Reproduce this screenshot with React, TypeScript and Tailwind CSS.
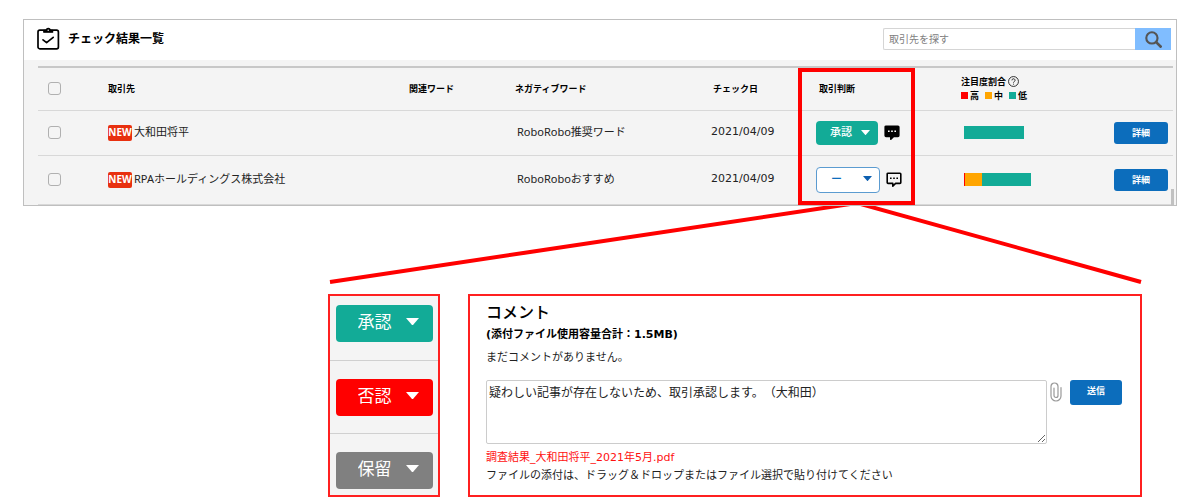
import { useState } from 'react';

interface Partner {
  id: number;
  name: string;
  negativeWord: string;
  checkedAt: string;
  status: string;
  commented: boolean;
  ratio: { high: number; middle: number; low: number };
}

const partners: Partner[] = [
  {
    id: 1,
    name: '大和田将平',
    negativeWord: 'RoboRobo推奨ワード',
    checkedAt: '2021/04/09',
    status: '承認',
    commented: true,
    ratio: { high: 0, middle: 0, low: 60 },
  },
  {
    id: 2,
    name: 'RPAホールディングス株式会社',
    negativeWord: 'RoboRoboおすすめ',
    checkedAt: '2021/04/09',
    status: 'ー',
    commented: false,
    ratio: { high: 1, middle: 17, low: 49 },
  },
];

const statuses = ['承認', '否認', '保留', 'ー'];

const statusStyles: Record<string, string> = {
  承認: 'h-6 w-[62px] bg-[#12ab97] text-white',
  否認: 'h-6 w-[62px] bg-[#ff0000] text-white',
  保留: 'h-6 w-[62px] bg-[#808080] text-white',
  ー: 'h-[26px] w-16 bg-white text-[#0c6dbc] border border-[#5b9bd0]',
};

const largeStatusStyles: Record<string, string> = {
  承認: 'bg-[#12ab97] text-white',
  否認: 'bg-[#ff0000] text-white',
  保留: 'bg-[#808080] text-white',
  ー: 'bg-white text-[#0c6dbc] border border-[#5b9bd0]',
};

function StatusSelect({ initial, label, large }: { initial: string; label: string; large?: boolean }) {
  const [status, setStatus] = useState(initial);
  const style = large
    ? `h-[37px] w-[97px] pl-[22px] pb-[2px] text-[17px] ${largeStatusStyles[status]}`
    : `pl-[14px] text-[11px] font-medium ${statusStyles[status]}`;

  return (
    <div className="relative inline-block align-middle">
      <select
        aria-label={label}
        value={status}
        onChange={(e) => setStatus(e.target.value)}
        className={`block appearance-none rounded ${style}`}
      >
        {statuses.map((s) => (
          <option key={s} value={s}>
            {s}
          </option>
        ))}
      </select>
      <svg
        viewBox="0 0 12 7"
        className={`pointer-events-none absolute ${large ? 'right-[14px] top-[13px] w-[13px]' : 'right-[8px] top-[9px] w-[9px]'} ${status === 'ー' ? 'text-[#0c5fb0]' : 'text-white'}`}
      >
        <path d="M0 0h12L6 7z" fill="currentColor" />
      </svg>
    </div>
  );
}

function CommentIcon({ filled }: { filled: boolean }) {
  return (
    <svg viewBox="0 0 16 16" className="w-4 h-4">
      <path
        d="M2 1.2h12a.8.8 0 0 1 .8.8v8.6a.8.8 0 0 1-.8.8H9.6L6.8 14.2v-2.8H2a.8.8 0 0 1-.8-.8V2a.8.8 0 0 1 .8-.8z"
        fill={filled ? '#000' : 'none'}
        stroke="#000"
        strokeWidth={1.6}
        strokeLinejoin="round"
      />
      <path d="M4 5.5h1.6v1.6H4zM7.2 5.5h1.6v1.6H7.2zM10.4 5.5H12v1.6h-1.6z" fill={filled ? '#fff' : '#000'} />
    </svg>
  );
}

function ClipboardIcon() {
  return (
    <svg viewBox="0 0 24 24" className="w-6 h-6 mb-[2px]" fill="none" stroke="#000" strokeWidth={1.7} strokeLinejoin="round">
      <rect x="1" y="4.2" width="20.4" height="18.6" rx="1.8" />
      <path d="M6.8 6.2V4.4h2.4a2 2 0 0 1 4 0h2.4v1.8z" fill="#000" strokeWidth={1.3} />
      <circle cx="11.2" cy="4.3" r=".7" fill="#fff" stroke="none" />
      <path d="M6 13.8l3.6 2.9 6.6-5.4" strokeLinecap="round" />
    </svg>
  );
}

function PartnerTable() {
  return (
    <table className="w-full table-fixed border-t-2 border-[#c8c8c8] text-left text-[11px] text-[#222]">
      <colgroup>
        <col className="w-[70px]" />
        <col />
        <col className="w-[106px]" />
        <col className="w-[196px]" />
        <col className="w-[105px]" />
        <col className="w-[145px]" />
        <col className="w-[153px]" />
        <col className="w-[59px]" />
      </colgroup>
      <thead className="text-[9px] text-black">
        <tr className="h-[43px] border-b border-[#d8d8d8]">
          <th className="pl-[10px]">
            <input type="checkbox" aria-label="すべて選択" className="block w-[13px] h-[13px] appearance-none rounded-[3px] border border-[#b0b0b0]" />
          </th>
          <th>取引先</th>
          <th>関連ワード</th>
          <th>ネガティブワード</th>
          <th className="pl-[2px]">チェック日</th>
          <th className="pl-[3px]">取引判断</th>
          <th className="leading-[14px]">
            <div className="flex items-center gap-[2px]">
              注目度割合
              <svg viewBox="0 0 12 12" className="w-[11px] h-[11px]" fill="none" stroke="#222">
                <circle cx="6" cy="6" r="5.4" />
                <path d="M4.3 4.8a1.7 1.7 0 1 1 2.5 1.4q-.8.4-.8 1.1M6 8.4v1" />
              </svg>
            </div>
            <div className="flex items-center gap-[6px]">
              <span className="flex items-center gap-[2px]"><i className="w-[7px] h-[7px] bg-[#ff0000]" />高</span>
              <span className="flex items-center gap-[2px]"><i className="w-[7px] h-[7px] bg-[#ffa500]" />中</span>
              <span className="flex items-center gap-[2px]"><i className="w-[7px] h-[7px] bg-[#12ab97]" />低</span>
            </div>
          </th>
          <th />
        </tr>
      </thead>
      <tbody>
        {partners.map((partner) => (
          <tr key={partner.id} className="h-[45px] border-b border-[#d8d8d8] last:h-[49px]">
            <td className="pl-[10px]">
              <input type="checkbox" aria-label={`${partner.name}を選択`} className="block w-[13px] h-[13px] appearance-none rounded-[3px] border border-[#b0b0b0]" />
            </td>
            <td>
              <div className="flex items-center gap-[2px]">
                <span className="flex h-4 w-6 items-center justify-center rounded-[2px] bg-[#e8300f] text-[10px] font-bold text-white">NEW</span>
                {partner.name}
              </div>
            </td>
            <td />
            <td className="pl-[2px]">{partner.negativeWord}</td>
            <td className="font-['DejaVu_Sans','Noto_Sans_CJK_JP',sans-serif]">
              {partner.checkedAt}
            </td>
            <td>
              <div className="flex items-center gap-[6px]">
                <StatusSelect initial={partner.status} label={`${partner.name}の取引判断`} />
                <button type="button" aria-label="コメント">
                  <CommentIcon filled={partner.commented} />
                </button>
              </div>
            </td>
            <td className="pl-[3px]">
              <div className="flex h-[13px]">
                <div className="bg-[#ff0000]" style={{ width: partner.ratio.high }} />
                <div className="bg-[#ffa500]" style={{ width: partner.ratio.middle }} />
                <div className="bg-[#12ab97]" style={{ width: partner.ratio.low }} />
              </div>
            </td>
            <td>
              <button type="button" className="block h-[22px] w-[54px] rounded-[3px] bg-[#0c6dbc] text-[9px] font-bold text-white">
                詳細
              </button>
            </td>
          </tr>
        ))}
      </tbody>
    </table>
  );
}

function CommentPanel() {
  return (
    <section className="flex-1 border-2 border-[#ff2020] px-4 pt-[5px] text-[11px] text-[#222] font-['DejaVu_Sans','Noto_Sans_CJK_JP',sans-serif]">
      <h2 className="text-[16px] font-medium leading-6 text-black">コメント</h2>
      <p className="font-bold leading-5 text-black">(添付ファイル使用容量合計：1.5MB)</p>
      <p className="mt-[3px] leading-5">まだコメントがありません。</p>
      <div className="mt-3 flex items-start">
        <textarea
          aria-label="コメント"
          defaultValue="疑わしい記事が存在しないため、取引承認します。（大和田）"
          className="block h-16 flex-1 rounded-[2px] border border-[#ccc] px-[2px] py-[2px] text-[12px] leading-5 text-[#222] [text-spacing-trim:space-all]"
        />
        <button type="button" aria-label="ファイルを添付" className="ml-[3px] mt-[2px]">
          <svg viewBox="0 0 12 20" className="h-5 w-3" fill="none" stroke="#999" strokeWidth={1.2} strokeLinecap="round">
            <path d="M11 5.5V14a5 5 0 0 1-10 0V4.5a3.5 3.5 0 0 1 7 0v9a2 2 0 0 1-4 0V6" />
          </svg>
        </button>
        <button type="button" className="ml-2 mr-[2px] h-[25px] w-[52px] rounded-[3px] bg-[#0c6dbc] text-[9px] font-bold text-white">
          送信
        </button>
      </div>
      <a href="#report" className="mt-[5px] block leading-[18px] text-[#ff1010]">調査結果_大和田将平_2021年5月.pdf</a>
      <p className="leading-[18px]">ファイルの添付は、ドラッグ＆ドロップまたはファイル選択で貼り付けてください</p>
    </section>
  );
}

export default function App() {
  return (
    <main className="bg-white pt-[19px] font-['Noto_Sans','Noto_Sans_CJK_JP',sans-serif]">
      <section className="relative mx-[23px] border border-[#bfbfbf] bg-[#f4f4f4]">
        <header className="flex h-10 items-center bg-white pb-[2px] pl-[13px] pr-[5px]">
          <ClipboardIcon />
          <h1 className="ml-[7px] flex-1 text-[12px] font-bold">チェック結果一覧</h1>
          <form className="flex h-[22px] w-[288px]" onSubmit={(e) => e.preventDefault()}>
            <input
              type="search"
              aria-label="取引先を探す"
              placeholder="取引先を探す"
              className="min-w-0 flex-1 rounded-l-[2px] border border-r-0 border-[#d5d5d5] px-[5px] text-[10px] placeholder:text-[#808080]"
            />
            <button type="submit" aria-label="検索" className="flex w-9 items-center justify-center bg-[#80bdff]">
              <svg viewBox="0 0 16 16" className="h-[17px] w-[17px]" fill="none" stroke="#555" strokeWidth={2}>
                <circle cx="6.5" cy="6.5" r="5.3" />
                <path d="M10.5 10.5l5 5" strokeWidth={2.5} />
              </svg>
            </button>
          </form>
        </header>
        <div className="pl-[14px] pr-[3px] pt-[6px]">
          <PartnerTable />
        </div>
        <div className="absolute bottom-0 right-[2px] h-4 w-[3px] bg-[#c1c1c1]" />
        <div className="absolute bottom-0 right-[261px] top-[48px] w-[117px] border-4 border-[#ff0000]" />
      </section>

      {/* callout lines from the judgement column to the enlarged views */}
      <svg viewBox="0 0 1200 88" className="block w-full">
        <path d="M330 76L857 -3L1141 76" fill="none" stroke="#ff0000" strokeWidth={4} />
      </svg>

      <div className="ml-[328px] mr-[58px] flex gap-[28px]">
        <ul className="w-28 border-2 border-[#ff2020] bg-[#f4f4f4]">
          <li className="flex h-[65px] justify-center border-b border-[#d0d0d0] pt-[9px]">
            <StatusSelect initial="承認" label="承認" large />
          </li>
          <li className="flex h-[73px] justify-center border-b border-[#d0d0d0] pt-[18px]">
            <StatusSelect initial="否認" label="否認" large />
          </li>
          <li className="flex h-[61px] justify-center pt-[18px]">
            <StatusSelect initial="保留" label="保留" large />
          </li>
        </ul>
        <CommentPanel />
      </div>
    </main>
  );
}
